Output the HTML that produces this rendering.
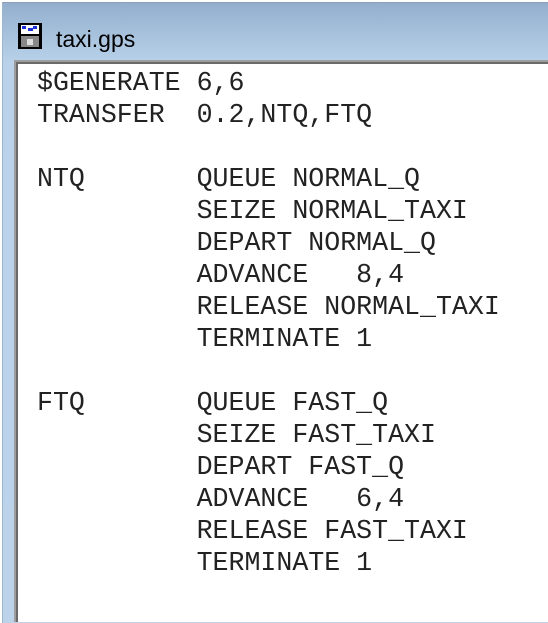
<!DOCTYPE html><html><head><style>
body{margin:0;width:548px;height:616px;background:#fff;position:relative;overflow:hidden}
#frame{position:absolute;left:2px;top:2px;width:560px;height:620px;background:linear-gradient(#93afcd 0px,#b9d2ea 60px,#bcd3ea 100%);border-top:1px solid #8a9fb6;border-left:1px solid #9fb5cc}
#title{position:absolute;left:56px;top:26px;font:23px "Liberation Sans",sans-serif;color:#000}
#client{position:absolute;left:14px;top:60px;width:560px;height:560px;background:#fff;border-top:2px solid #9e9e9e;border-left:2px solid #9e9e9e;box-shadow:inset 2px 2px 0 #6a6a6a}
pre{position:absolute;left:37px;top:67px;margin:0;font:26.6px/32px "Liberation Mono",monospace;color:#222}
</style></head><body>
<div id="frame"></div>
<svg style="position:absolute;left:17px;top:22px" width="26" height="28"><rect x="1" y="1" width="24" height="26" fill="#000"/><rect x="4" y="3" width="18" height="9" fill="#fff"/><rect x="5" y="4" width="4" height="3" fill="#1c32d8"/><rect x="11" y="6" width="5" height="3" fill="#1c32d8"/><rect x="16" y="4" width="4" height="3" fill="#1c32d8"/><rect x="4" y="14" width="18" height="11" fill="#888"/><rect x="10" y="17" width="6" height="6" fill="#ddd"/></svg>
<div id="title">taxi.gps</div>
<div id="client"></div>
<pre>$GENERATE 6,6
TRANSFER  0.2,NTQ,FTQ

NTQ       QUEUE NORMAL_Q
          SEIZE NORMAL_TAXI
          DEPART NORMAL_Q
          ADVANCE   8,4
          RELEASE NORMAL_TAXI
          TERMINATE 1

FTQ       QUEUE FAST_Q
          SEIZE FAST_TAXI
          DEPART FAST_Q
          ADVANCE   6,4
          RELEASE FAST_TAXI
          TERMINATE 1</pre>
</body></html>
